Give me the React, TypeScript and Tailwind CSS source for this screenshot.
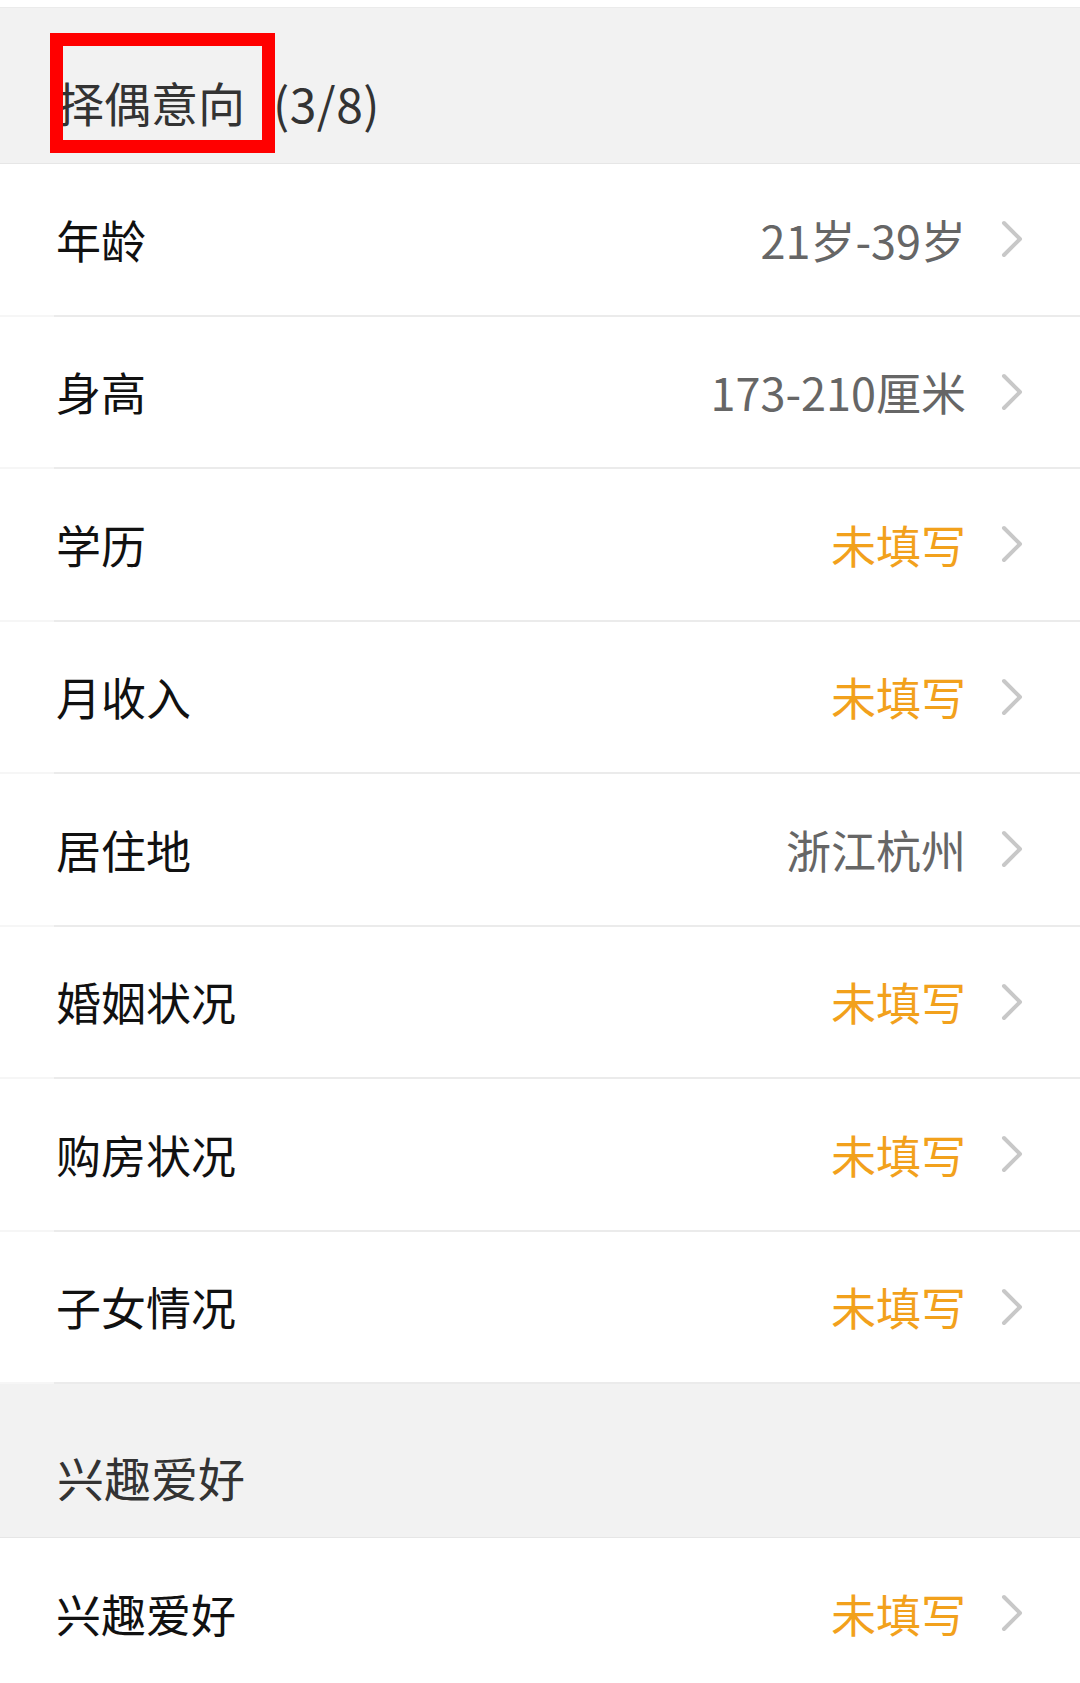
import React from "react";

const FONT = { fontFamily: '"Noto Sans CJK SC", "Noto Sans", sans-serif' };

type Row = { label: string; value: string; filled: boolean };

const rows: Row[] = [
  { label: "年龄", value: "21岁-39岁", filled: true },
  { label: "身高", value: "173-210厘米", filled: true },
  { label: "学历", value: "未填写", filled: false },
  { label: "月收入", value: "未填写", filled: false },
  { label: "居住地", value: "浙江杭州", filled: true },
  { label: "婚姻状况", value: "未填写", filled: false },
  { label: "购房状况", value: "未填写", filled: false },
  { label: "子女情况", value: "未填写", filled: false },
];

function Chevron() {
  return (
    <svg width="22" height="38" viewBox="0 0 22 38" className="ml-[35px] shrink-0">
      <polyline
        points="3,3 19,19 3,35"
        fill="none"
        stroke="#c8c8c8"
        strokeWidth="4"
        strokeLinecap="round"
        strokeLinejoin="round"
      />
    </svg>
  );
}

function ListRow({ row, last }: { row: Row; last?: boolean }) {
  return (
    <div>
      <div className="h-[150.5px] flex items-center pl-[56px] pr-[57px] bg-white">
        <span className="text-[45px] leading-none text-[#111111]">{row.label}</span>
        <div className="flex-1" />
        <span
          className={
            row.filled
              ? "text-[45px] leading-none text-[#666666]"
              : "text-[45px] leading-none text-[#f2a11c]"
          }
        >
          {row.value}
        </span>
        <Chevron />
      </div>
      {!last && (
        <div className="h-[2px] bg-[#f6f6f6]">
          <div className="ml-[54px] h-full bg-[#ebebeb]" />
        </div>
      )}
    </div>
  );
}

export default function App() {
  return (
    <div className="w-[1080px] h-[1683px] overflow-hidden bg-white" style={FONT}>
      <div className="h-[7px] bg-white" />
      <div className="h-[1px] bg-[#ebebeb]" />
      <div className="relative h-[156px] bg-[#f2f2f2] flex items-center pl-[57px] pt-[32px] border-b border-[#e6e6e6]">
        <span className="text-[47px] leading-none text-[#333333]">择偶意向</span>
        <span className="ml-[28px] text-[48px] leading-none tracking-[0.5px] text-[#333333]">(3/8)</span>
        <div className="absolute left-[50px] top-[25px] w-[225px] h-[120px] border-[13px] border-[#ff0000]" />
      </div>
      {rows.map((r) => (
        <ListRow key={r.label} row={r} />
      ))}
      <div className="h-[154px] bg-[#f2f2f2] flex items-center pl-[57px] pt-[32px] border-b border-[#e6e6e6]">
        <span className="text-[47px] leading-none text-[#333333]">兴趣爱好</span>
      </div>
      <ListRow row={{ label: "兴趣爱好", value: "未填写", filled: false }} last />
    </div>
  );
}
